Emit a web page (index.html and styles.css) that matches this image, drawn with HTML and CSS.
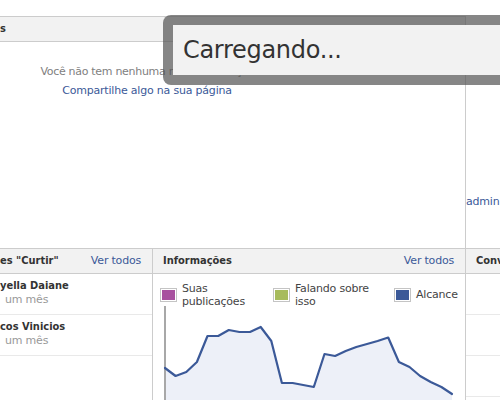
FILE: index.html
```html
<!DOCTYPE html>
<html lang="pt-BR">
<head>
<meta charset="utf-8">
<title>Painel</title>
<link rel="stylesheet" href="styles.css">
</head>
<body>
<div class="page">
  <section class="top">
    <div class="main">
      <div class="bar"><span class="title">s</span></div>
      <div class="empty">
        <p class="note">Você não tem nenhuma nova notificação.</p>
        <a class="link share" href="#">Compartilhe algo na sua página</a>
      </div>
    </div>
    <div class="side"><a class="link" href="#">admin</a></div>
  </section>
  <section class="bottom">
    <div class="col c1">
      <div class="bar bar-c1"><span class="title">es "Curtir"</span><a class="link" href="#">Ver todos</a></div>
      <div class="row"><div class="name">yella Daiane</div><div class="when">um mês</div></div>
      <div class="row"><div class="name">cos Vinicios</div><div class="when">um mês</div></div>
    </div>
    <div class="col c2">
      <div class="bar bar-c2"><span class="title">Informações</span><a class="link" href="#">Ver todos</a></div>
      <div class="legend">
        <div class="item item1"><span class="swatch purple"></span><span>Suas<br>publicações</span></div>
        <div class="item item2"><span class="swatch green"></span><span>Falando sobre<br>isso</span></div>
        <div class="item"><span class="swatch blue"></span><span>Alcance</span></div>
      </div>
      <svg class="chart" width="312" height="95" viewBox="0 0 312 95">
        <polygon class="area" points="12,63 22.6,71 33.3,67 43.9,57 54.5,31 65.2,31 75.8,25 86.4,27 97,27 107.7,22 118.3,36 128.9,78 139.6,78 150.2,80 160.8,82 171.5,49 182.1,51 192.7,46 203.3,42 214,39 224.6,36 235.2,32.5 245.9,57 256.5,62 267.1,71 277.7,77 288.4,82 299,89 299,95 12,95"/>
        <line class="axis" x1="12" y1="1" x2="12" y2="95"/>
        <polyline class="series" points="12,63 22.6,71 33.3,67 43.9,57 54.5,31 65.2,31 75.8,25 86.4,27 97,27 107.7,22 118.3,36 128.9,78 139.6,78 150.2,80 160.8,82 171.5,49 182.1,51 192.7,46 203.3,42 214,39 224.6,36 235.2,32.5 245.9,57 256.5,62 267.1,71 277.7,77 288.4,82 299,89"/>
      </svg>
    </div>
    <div class="col c3">
      <div class="bar bar-c3"><span class="title">Conv</span></div>
      <div class="slot"></div>
      <div class="slot"></div>
      <div class="slot"></div>
    </div>
  </section>
</div>
<div class="dialog"><div class="dialog-body">Carregando...</div></div>
</body>
</html>
```
FILE: styles.css
```css
html, body {
  margin: 0;
  padding: 0;
}
body {
  width: 500px;
  height: 400px;
  overflow: hidden;
  position: relative;
  background: #fff;
  font-family: "DejaVu Sans", sans-serif;
  font-size: 11px;
  letter-spacing: -0.2px;
  color: #333;
}
.link {
  color: #3b5998;
  text-decoration: none;
}
.title {
  font-family: "DejaVu Sans Condensed", "DejaVu Sans", sans-serif;
  font-stretch: condensed;
  font-weight: bold;
  letter-spacing: 0;
  color: #333;
}
.bar {
  height: 24px;
  border-top: 1px solid #ccc;
  border-bottom: 1px solid #ccc;
  background: #f2f2f2;
  display: flex;
  align-items: center;
  justify-content: space-between;
  line-height: 14px;
}
.top {
  margin-top: 16px;
  height: 232px;
  display: flex;
}
.main {
  width: 466px;
  box-sizing: border-box;
  border-right: 1px solid #ccc;
}
.empty {
  width: 294px;
  padding-top: 23px;
  text-align: center;
}
.note {
  margin: 0;
  padding-left: 4px;
  color: #808080;
  line-height: 14px;
  letter-spacing: -0.3px;
}
.share {
  display: block;
  margin-top: 5px;
  line-height: 14px;
}
.side {
  flex: 1;
  padding-top: 179px;
  line-height: 14px;
  white-space: nowrap;
  overflow: hidden;
}
.bottom {
  display: grid;
  grid-template-columns: 153px 313px 1fr;
  height: 152px;
}
.col {
  box-sizing: border-box;
  min-width: 0;
  overflow: hidden;
}
.c1, .c2 {
  border-right: 1px solid #ccc;
}
.bar-c1 { padding: 0 11px 0 0; }
.bar-c2 { padding: 0 11px 0 10px; }
.bar-c3 { padding: 0 0 0 10px; white-space: nowrap; }
.row {
  padding: 5px 0 7px;
  line-height: 14px;
  border-bottom: 1px solid #e9e9e9;
}
.name {
  font-family: "DejaVu Sans Condensed", "DejaVu Sans", sans-serif;
  font-stretch: condensed;
  font-weight: bold;
  letter-spacing: 0;
  color: #333;
}
.when {
  color: #999;
  padding-left: 5px;
}
.slot {
  height: 40px;
  border-bottom: 1px solid #e9e9e9;
}
.legend {
  display: flex;
  height: 21px;
  padding: 10px 0 0 7px;
  align-items: center;
}
.item {
  display: flex;
  align-items: center;
  gap: 5px;
  line-height: 13px;
  color: #444;
  white-space: nowrap;
}
.item1 { width: 113px; }
.item2 { width: 121px; }
.swatch {
  flex: none;
  width: 17px;
  height: 14px;
  box-sizing: border-box;
  border: 1px solid #c4c4c4;
  padding: 1px;
  background-clip: content-box;
}
.purple { background-color: #a8519f; }
.green { background-color: #a7bb5c; }
.blue { background-color: #3b5998; }
.chart {
  display: block;
}
.area {
  fill: #edf0f8;
}
.axis {
  stroke: #a8a8a8;
  stroke-width: 2;
}
.series {
  fill: none;
  stroke: #3b5998;
  stroke-width: 2.2;
  stroke-linejoin: round;
  stroke-linecap: round;
}
.dialog {
  position: absolute;
  left: 163px;
  top: 15px;
  width: 400px;
  border: 10px solid rgba(82, 82, 82, 0.7);
  border-radius: 8px;
  background: #f2f2f2;
  background-clip: padding-box;
}
.dialog-body {
  height: 50px;
  box-sizing: border-box;
  padding: 1px 0 0 10px;
  line-height: 49px;
  font-size: 24px;
  letter-spacing: -0.3px;
  color: #333;
}
```
